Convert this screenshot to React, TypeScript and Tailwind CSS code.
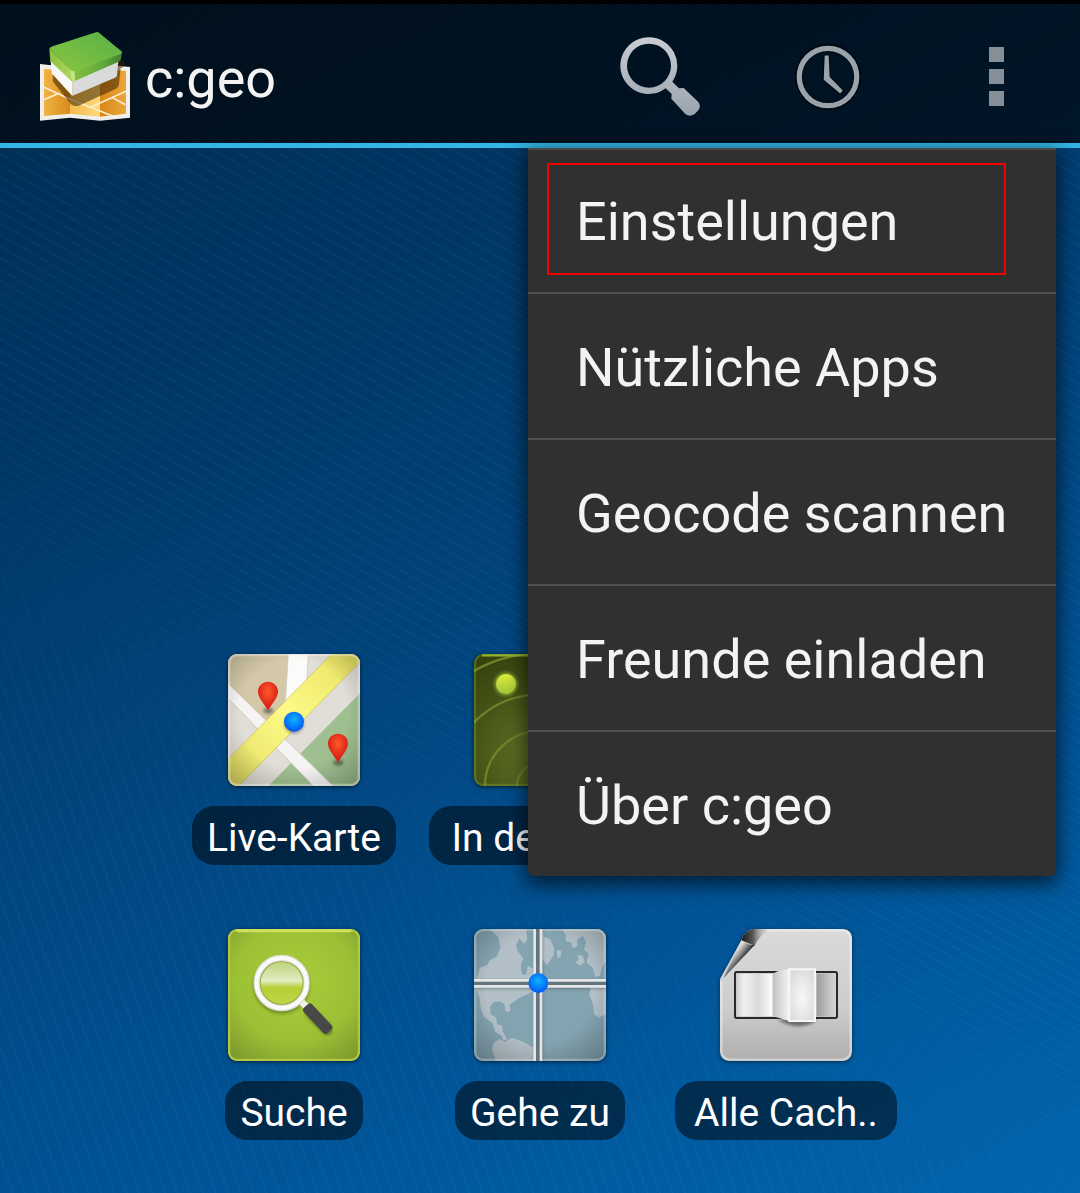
import React from "react";

function LogoIcon() {
  return (
    <svg viewBox="120 93 273 273" className="size-[91px] shrink-0" aria-hidden="true">
      <defs>
        <linearGradient id="lg-top" x1="0" y1="1" x2="1" y2="0">
          <stop offset="0" stopColor="#8cc63f" />
          <stop offset="1" stopColor="#56b047" />
        </linearGradient>
        <linearGradient id="lg-left" x1="0" y1="0" x2="1" y2="1">
          <stop offset="0" stopColor="#86bd3a" />
          <stop offset="1" stopColor="#b4d968" />
        </linearGradient>
        <linearGradient id="lg-right" x1="0" x2="1">
          <stop offset="0" stopColor="#84c043" />
          <stop offset=".6" stopColor="#63a93c" />
          <stop offset="1" stopColor="#42802f" />
        </linearGradient>
        <linearGradient id="lg-o1" x1="0" x2="1">
          <stop offset="0" stopColor="#f0b445" />
          <stop offset="1" stopColor="#d98a1b" />
        </linearGradient>
        <linearGradient id="lg-o2" x1="0" x2="1">
          <stop offset="0" stopColor="#f2bb4e" />
          <stop offset="1" stopColor="#ffd878" />
        </linearGradient>
        <linearGradient id="lg-o3" x1="0" x2="1">
          <stop offset="0" stopColor="#d98716" />
          <stop offset="1" stopColor="#eca63a" />
        </linearGradient>
      </defs>
      <path d="M120 192 L210 202 L300 192 L390 201 V353 L300 362 L210 353 L120 362Z" fill="#f1efec" />
      <path d="M132 207 L210 214 V341 L132 348Z" fill="url(#lg-o1)" />
      <path d="M210 214 L300 206 V350 L210 341Z" fill="url(#lg-o2)" />
      <path d="M300 206 L378 213 V341 L300 350Z" fill="url(#lg-o3)" />
      <g stroke="#fbeed2" strokeWidth="5" fill="none">
        <path d="M132 262 L210 298 L338 348" />
        <path d="M132 299 L178 279" />
        <path d="M272 322 L378 274" />
        <path d="M336 292 L376 314" />
      </g>
      <path d="M160 215 L158 244 L212 312 Q222 321 236 317 L348 266 Q356 262 357 252 L362 205 L374 198 L372 180Z" fill="#3a2200" opacity=".55" />
      <path d="M152 182 L155 220 L212 283 L218 288 V240Z" fill="#f8f8f8" />
      <path d="M218 240 L355 184 L351 226 Q350 231 345 233 L218 287Z" fill="#d9dbdb" />
      <path d="M148 146 L217 214 L217 246 L151 184Z" fill="url(#lg-left)" />
      <path d="M217 214 L366 157 L363 176 Q362 182 356 185 L217 246Z" fill="url(#lg-right)" />
      <path d="M210 208 L217 246 L225 242 L224 212Z" fill="#c3e487" />
      <path d="M148 146 Q150 142 158 139 L288 97 Q293 95 297 98 L366 155 Q366 160 360 163 L226 213 Q217 216 211 209Z" fill="url(#lg-top)" />
    </svg>
  );
}

function SearchIcon() {
  return (
    <svg viewBox="60 111 240 240" className="size-20" aria-hidden="true">
      <defs>
        <linearGradient id="si" x1="0" y1="0" x2="0" y2="1">
          <stop offset="0" stopColor="#c9ccd2" />
          <stop offset="1" stopColor="#9aa3ac" />
        </linearGradient>
      </defs>
      <path
        d="M147 112a85 85 0 1 0 50 153l18 17-1 14 42 46q13 11 28 0l11-11q9-12 0-25l-44-42-14 1-20-20a85 85 0 0 0-70-133zm0 19a66 66 0 1 1 0 132a66 66 0 0 1 0-132z"
        fill="url(#si)"
        fillRule="evenodd"
      />
    </svg>
  );
}

function ClockIcon() {
  return (
    <svg viewBox="583 130 200 200" className="size-[66px]" aria-hidden="true">
      <circle cx="683" cy="230" r="88" fill="none" stroke="#00080f" strokeWidth="24" />
      <circle cx="683" cy="230" r="87" fill="none" stroke="#9aa2aa" strokeWidth="16" />
      <path d="M673 165h12l3 65 40 41-8 9-50-42z" fill="#9aa2aa" stroke="#00080f" strokeWidth="6" paintOrder="stroke" />
    </svg>
  );
}

function OverflowIcon() {
  return (
    <span className="flex flex-col gap-[7px]" aria-hidden="true">
      <span className="size-[15px] bg-[#858f98]" />
      <span className="size-[15px] bg-[#858f98]" />
      <span className="size-[15px] bg-[#858f98]" />
    </span>
  );
}

const TILE = "size-[132px] rounded-[9px] shadow-[0_1px_4px_rgba(0,0,0,0.6)]";

function SharedDefs() {
  return (
    <svg className="absolute size-0" aria-hidden="true">
      <defs>
        <radialGradient id="dot" cx=".5" cy=".4" r=".6">
          <stop offset="0" stopColor="#12b4ff" />
          <stop offset="1" stopColor="#0057f5" />
        </radialGradient>
        <radialGradient id="shade" cx=".5" cy=".45" r=".75">
          <stop offset=".55" stopColor="#000" stopOpacity="0" />
          <stop offset="1" stopColor="#000" stopOpacity=".28" />
        </radialGradient>
        <filter id="soft" x="-30%" y="-30%" width="160%" height="160%">
          <feGaussianBlur stdDeviation="4" />
        </filter>
      </defs>
    </svg>
  );
}

function Pin({ x, y }: { x: number; y: number }) {
  return (
    <g transform={`translate(${x} ${y})`}>
      <ellipse cx="1" cy="54" rx="15" ry="9" fill="#222" opacity=".5" filter="url(#soft)" />
      <path d="M0 -33C17 -33 30 -20 30 -3C30 15 10 35 0 53C-10 35 -30 15 -30 -3C-30 -20 -17 -33 0 -33Z" fill="url(#pin)" />
    </g>
  );
}

function MapTile() {
  return (
    <svg viewBox="144 42 396 396" className={TILE} aria-hidden="true">
      <defs>
        <radialGradient id="pin" cx=".5" cy=".35" r=".5">
          <stop offset="0" stopColor="#ff5a28" />
          <stop offset="1" stopColor="#dc2118" />
        </radialGradient>
        <linearGradient id="road" x1="0" x2="1" y1="1" y2="0">
          <stop offset="0" stopColor="#e2dc62" />
          <stop offset=".5" stopColor="#fdfb86" />
          <stop offset="1" stopColor="#e6df62" />
        </linearGradient>
      </defs>
      <path d="M144 42h396v396H144z" fill="#e1ded7" />
      <path d="M144 42h181l-10 155-53 50L144 138z" fill="#d3c8a8" />
      <path d="M540 160v278H265z" fill="#9fbf90" />
      <path d="M325 42h60l-7 115-63 50z" fill="#fbfbfa" stroke="#c8c4b8" strokeWidth="2" />
      <path d="M144 130L460 438h-60L144 175z" fill="#f5f4f2" stroke="#bdb9ae" strokeWidth="2" />
      <path d="M144 358L455 42h85v24L176 438h-32z" fill="url(#road)" stroke="#cdb955" strokeWidth="2" />
      <path d="M144 42h396v396H144z" fill="url(#shade)" />
      <rect x="147" y="45" width="390" height="390" rx="24" fill="none" stroke="#fff" strokeOpacity=".35" strokeWidth="8" />
      <circle cx="342" cy="251" r="30" fill="#333" opacity=".4" filter="url(#soft)" />
      <circle cx="342" cy="245" r="30" fill="url(#dot)" />
      <Pin x={264} y={158} />
      <Pin x={474} y={314} />
    </svg>
  );
}

function RadarTile() {
  return (
    <svg viewBox="162 42 396 396" className={TILE} aria-hidden="true">
      <defs>
        <radialGradient id="radar" cx=".5" cy=".75" r=".8">
          <stop offset="0" stopColor="#66792a" />
          <stop offset=".6" stopColor="#475417" />
          <stop offset="1" stopColor="#37430f" />
        </radialGradient>
        <linearGradient id="blip" x1="0" y1="0" x2="0" y2="1">
          <stop offset="0" stopColor="#e0ee3c" />
          <stop offset="1" stopColor="#9fc83a" />
        </linearGradient>
      </defs>
      <path d="M162 42h396v396H162z" fill="url(#radar)" />
      <g fill="none" stroke="#6d842a" strokeWidth="7">
        <circle cx="360" cy="438" r="69" />
        <circle cx="360" cy="438" r="165" />
        <circle cx="360" cy="438" r="275" />
        <circle cx="360" cy="438" r="398" />
      </g>
      <rect x="165" y="45" width="390" height="390" rx="24" fill="none" stroke="#94ab2c" strokeOpacity=".35" strokeWidth="7" />
      <path d="M186 46h348" stroke="#94b22c" strokeWidth="7" />
      <circle cx="258" cy="132" r="35" fill="#a5cc3a" opacity=".6" filter="url(#soft)" />
      <circle cx="258" cy="132" r="30" fill="url(#blip)" />
    </svg>
  );
}

function SearchTile() {
  return (
    <svg viewBox="144 42 396 396" className={TILE} aria-hidden="true">
      <defs>
        <radialGradient id="lime" cx=".5" cy=".4" r=".75">
          <stop offset="0" stopColor="#a9cd3b" />
          <stop offset=".6" stopColor="#9cc035" />
          <stop offset="1" stopColor="#7b962c" />
        </radialGradient>
        <linearGradient id="glass" x1="0" y1="0" x2="0" y2="1">
          <stop offset="0" stopColor="#b9d276" />
          <stop offset=".45" stopColor="#e2ecc2" />
          <stop offset=".6" stopColor="#b5cf38" />
          <stop offset="1" stopColor="#bfd646" />
        </linearGradient>
      </defs>
      <path d="M144 42h396v396H144z" fill="url(#lime)" />
      <rect x="147" y="45" width="390" height="390" rx="24" fill="none" stroke="#b2c840" strokeWidth="7" />
      <path d="M170 47h344" stroke="#d3e05c" strokeWidth="9" />
      <circle cx="305" cy="212" r="75" fill="none" stroke="#3d4d10" strokeOpacity=".45" strokeWidth="20" filter="url(#soft)" />
      <path d="M390 292L442 345" stroke="#3d4d10" strokeOpacity=".5" strokeWidth="34" strokeLinecap="round" filter="url(#soft)" />
      <circle cx="305" cy="204" r="66" fill="url(#glass)" stroke="#8da532" strokeWidth="6" />
      <path d="M358 254L384 280" stroke="#eeefe8" strokeWidth="20" />
      <rect x="-52" y="-17" width="104" height="34" rx="10" fill="#484848" transform="translate(413 311) rotate(47)" />
      <circle cx="305" cy="204" r="75" fill="none" stroke="#dcddd6" strokeWidth="19" />
      <circle cx="305" cy="204" r="75" fill="none" stroke="#fafaf8" strokeWidth="12" />
    </svg>
  );
}

function WorldTile() {
  return (
    <svg viewBox="102 42 396 396" className={TILE} aria-hidden="true">
      <path d="M102 42h396v396H102z" fill="#84a3b1" />
      <g fill="#b2bfc6">
        <path d="M150 42L176 68 181 100 170 125 150 135 142 150 120 158 110 190 108 225 118 245 122 280 132 305 158 325 166 350 184 362 190 376 202 374 188 348 186 332 172 328 168 308 152 298 150 276 162 260 182 260 194 268 196 288 206 292 212 286 208 270 236 250 262 238 284 226 290 196 278 160 264 152 258 180 246 178 242 152 250 130 234 110 228 92 238 70 252 86 262 74 258 42Z" />
        <path d="M308 42L312 66 330 72 343 100 340 122 322 150 308 136 290 100 292 42Z" />
        <path d="M160 384L178 372 196 380 216 368 250 380 270 392 292 404 300 438H168L156 406Z" />
        <path d="M366 42L378 62 376 78 394 82 398 100 412 94 412 74 428 62 438 80 432 104 446 116 440 142 458 158 466 186 480 182 488 150 498 140V42Z" />
        <path d="M452 208L498 196V298L476 308 462 298 460 270 448 240Z" />
        <path d="M412 118L428 124 434 142 420 152 406 142 416 134Z" />
        <path d="M350 104L364 108 362 126 352 130Z" />
      </g>
      <path d="M102 42h396v396H102z" fill="url(#shade)" />
      <rect x="105" y="45" width="390" height="390" rx="24" fill="none" stroke="#d5e4ea" strokeOpacity=".35" strokeWidth="8" />
      <g fill="#46565f" opacity=".5" filter="url(#soft)">
        <path d="M102 196h396v26H102z" />
        <path d="M283 42h26v396h-26z" />
      </g>
      <path d="M280 42h27v396h-27zM102 192h396v26H102z" fill="#e4e6e7" />
      <path d="M288 42h11v396h-11zM102 200h396v10H102z" fill="#62757f" />
      <circle cx="295" cy="204" r="30" fill="url(#dot)" />
    </svg>
  );
}

function CachesTile() {
  return (
    <svg viewBox="150 42 396 396" className="size-[132px] drop-shadow-[0_1px_2px_rgba(0,0,0,0.5)]" aria-hidden="true">
      <defs>
        <linearGradient id="page" x1="0" y1="0" x2="0" y2="1">
          <stop offset="0" stopColor="#dadada" />
          <stop offset=".6" stopColor="#cdcdcd" />
          <stop offset="1" stopColor="#aeaeae" />
        </linearGradient>
        <linearGradient id="curlTop" x1="0" x2="1">
          <stop offset="0" stopColor="#1a1a1a" />
          <stop offset=".4" stopColor="#555" />
          <stop offset="1" stopColor="#d9d9d9" stopOpacity="0" />
        </linearGradient>
        <linearGradient id="curl" gradientUnits="userSpaceOnUse" x1="190" y1="120" x2="215" y2="140">
          <stop offset="0" stopColor="#d8d8d8" />
          <stop offset=".45" stopColor="#8a8a8a" />
          <stop offset="1" stopColor="#222" />
        </linearGradient>
        <linearGradient id="p1" x1="0" x2="1">
          <stop offset="0" stopColor="#d3d3d3" />
          <stop offset=".2" stopColor="#efefef" />
          <stop offset=".6" stopColor="#dadada" />
          <stop offset="1" stopColor="#fff" />
        </linearGradient>
        <linearGradient id="p2" x1="0" x2="1">
          <stop offset="0" stopColor="#c2c2c2" />
          <stop offset="1" stopColor="#f4f4f4" />
        </linearGradient>
        <linearGradient id="p3" x1="0" x2="1">
          <stop offset="0" stopColor="#9d9d9d" />
          <stop offset="1" stopColor="#d6d6d6" />
        </linearGradient>
        <radialGradient id="p4" cx=".5" cy=".55" r=".6">
          <stop offset="0" stopColor="#f8f8f8" />
          <stop offset="1" stopColor="#dcdcdc" />
        </radialGradient>
      </defs>
      <path d="M246 42H518Q546 44 546 70V410Q544 436 518 438H178Q152 436 150 410V192L214 76Q222 50 246 42Z" fill="url(#page)" />
      <path d="M290 46H518Q540 48 542 70V410Q540 432 518 434H178Q156 432 154 410V200" fill="none" stroke="#f6f6f6" strokeOpacity=".5" strokeWidth="7" />
      <path d="M246 42H300Q270 60 254 92L214 76Q222 50 246 42Z" fill="url(#curlTop)" />
      <path d="M214 76Q230 90 254 90L160 190Z" fill="url(#curl)" />
      <rect x="195" y="171" width="306" height="138" rx="5" fill="#c9c9c9" stroke="#2c2828" strokeWidth="6" />
      <path d="M201 176H308V304H201Z" fill="url(#p1)" />
      <path d="M440 176H497V304H440Z" fill="url(#p3)" />
      <path d="M322 312Q372 350 434 322L438 308Z" fill="#333" opacity=".6" filter="url(#soft)" />
      <path d="M308 176Q330 164 358 163V318Q330 310 308 304Z" fill="url(#p2)" />
      <path d="M358 163H435V318H358Z" fill="url(#p4)" stroke="#f7f7f7" strokeWidth="6" />
    </svg>
  );
}

function Tile({ label, wide, children }: { label: string; wide?: boolean; children: React.ReactNode }) {
  return (
    <button type="button" className="flex flex-col items-center gap-5">
      {children}
      <span
        className={
          "h-[59px] rounded-[22px] bg-black/50 px-[15px] pt-[3px] text-center text-[39px] leading-[59px] whitespace-nowrap text-white " +
          (wide ? "w-[222px]" : "")
        }
      >
        {label}
      </span>
    </button>
  );
}

const MENU = ["Einstellungen", "Nützliche Apps", "Geocode scannen", "Freunde einladen", "Über c:geo"];

export default function App() {
  return (
    <div className="relative isolate flex min-h-screen flex-col overflow-hidden bg-[linear-gradient(155deg,#002b50_0%,#003868_30%,#005294_72%,#0065ae_100%)] font-['Roboto',sans-serif]">
      <SharedDefs />
      <div className="absolute inset-0 -z-10 bg-[repeating-linear-gradient(30deg,rgba(255,255,255,0.05)_0px,rgba(255,255,255,0)_1px,rgba(255,255,255,0)_9px,rgba(255,255,255,0.05)_10px)] [mask-image:linear-gradient(30deg,transparent_24%,black_44%)]" />
      <div className="absolute inset-0 -z-10 bg-[repeating-linear-gradient(71deg,rgba(255,255,255,0.05)_0px,rgba(255,255,255,0)_1px,rgba(255,255,255,0)_11px,rgba(255,255,255,0.05)_12px)] [mask-image:linear-gradient(30deg,black_24%,transparent_42%)]" />

      <header className="relative z-10 flex h-[148px] items-center border-t-4 border-b-5 border-t-black border-b-[#33b5e5] bg-black/65 bg-clip-padding pt-1.5 pl-10">
        <LogoIcon />
        <h1 className="ml-3.5 flex-1 pt-1 text-[54px] leading-none text-[#f3f3f3]">c:geo</h1>
        <button type="button" aria-label="Suche" className="flex w-[168px] justify-center">
          <SearchIcon />
        </button>
        <button type="button" aria-label="Verlauf" className="flex w-[168px] justify-center">
          <ClockIcon />
        </button>
        <button type="button" aria-label="Weitere Optionen" className="flex w-[168px] justify-center">
          <OverflowIcon />
        </button>

        <nav className="absolute top-full right-6 mt-[5px] w-[528px] rounded-b-md bg-[#303030] shadow-[0_6px_20px_2px_rgba(0,0,0,0.65),inset_0_2px_0_#484848]">
          <ul className="divide-y-2 divide-[#505050]">
            {MENU.map((item, i) => (
              <li key={item} className="relative">
                <button
                  type="button"
                  className="flex h-36 w-full items-center pt-1 pl-12 text-left text-[54px] leading-none whitespace-nowrap text-[#f3f3f3]"
                >
                  {item}
                </button>
                {i === 0 && (
                  <span className="pointer-events-none absolute top-[15px] right-[50px] bottom-[17px] left-[19px] border-2 border-[#f40000]" />
                )}
              </li>
            ))}
          </ul>
        </nav>
      </header>

      <main className="mx-auto flex w-full max-w-[738px] flex-1 flex-col gap-16 pt-[506px] pb-12">
        <div className="grid grid-cols-3 justify-items-center">
          <Tile label="Live-Karte">
            <MapTile />
          </Tile>
          <Tile label="In der Nä.." wide>
            <RadarTile />
          </Tile>
        </div>
        <div className="grid grid-cols-3 justify-items-center">
          <Tile label="Suche">
            <SearchTile />
          </Tile>
          <Tile label="Gehe zu">
            <WorldTile />
          </Tile>
          <Tile label="Alle Cach.." wide>
            <CachesTile />
          </Tile>
        </div>
      </main>
    </div>
  );
}
